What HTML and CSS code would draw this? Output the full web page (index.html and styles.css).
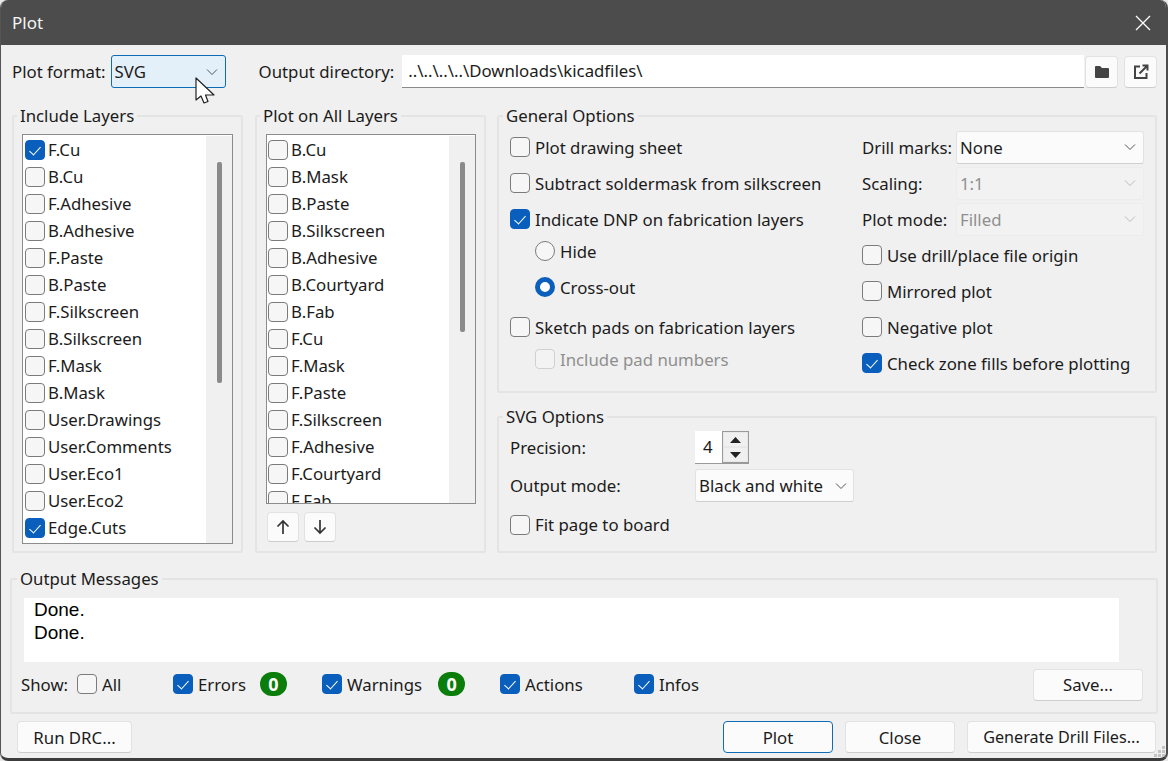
FILE: index.html
```html
<!DOCTYPE html>
<html lang="en">
<head>
<meta charset="utf-8">
<title>Plot</title>
<link rel="stylesheet" href="styles.css">
</head>
<body>
<div class="window">
  <header class="titlebar">
    <span class="title">Plot</span>
    <svg class="close-x" width="16" height="16" viewBox="0 0 16 16"><path d="M1 1 L15 15 M15 1 L1 15" stroke="#fff" stroke-width="1.300" fill="none"/></svg>
  </header>
  <div class="content">
    <div class="toprow">
      <span class="lbl">Plot format:</span>
      <div class="select format"><span>SVG</span><svg class="chev" width="12" height="8" viewBox="0 0 12 8"><path d="M1 1.500 L6 6.500 L11 1.500" stroke="#555" fill="none"/></svg></div>
      <span class="lbl outdir-label">Output directory:</span>
      <div class="textinput">..\..\..\..\Downloads\kicadfiles\</div>
      <button class="btn icon-btn"><svg width="16" height="14" viewBox="0 0 16 14"><path d="M1 2 a1 1 0 0 1 1-1 h4 l2 2 h6 a1 1 0 0 1 1 1 v8 a1 1 0 0 1-1 1 H2 a1 1 0 0 1-1-1 Z" fill="#444"/></svg></button>
      <button class="btn icon-btn"><svg width="18" height="18" viewBox="0 0 18 18"><path d="M8 3.500 H3 V15 H14.500 V10" stroke="#444" stroke-width="2" fill="none"/><path d="M7.500 10.500 L15 3 M10.500 2.500 H15.500 V7.500" stroke="#444" stroke-width="2" fill="none"/></svg></button>
    </div>
    <div class="main">
      <fieldset class="group include">
        <legend>Include Layers</legend>
        <div class="list">
          <div class="rows">
            <label class="check on"><i></i>F.Cu</label>
            <label class="check"><i></i>B.Cu</label>
            <label class="check"><i></i>F.Adhesive</label>
            <label class="check"><i></i>B.Adhesive</label>
            <label class="check"><i></i>F.Paste</label>
            <label class="check"><i></i>B.Paste</label>
            <label class="check"><i></i>F.Silkscreen</label>
            <label class="check"><i></i>B.Silkscreen</label>
            <label class="check"><i></i>F.Mask</label>
            <label class="check"><i></i>B.Mask</label>
            <label class="check"><i></i>User.Drawings</label>
            <label class="check"><i></i>User.Comments</label>
            <label class="check"><i></i>User.Eco1</label>
            <label class="check"><i></i>User.Eco2</label>
            <label class="check on"><i></i>Edge.Cuts</label>
          </div>
          <div class="scroll"><div class="thumb thumb-a"></div></div>
        </div>
      </fieldset>
      <fieldset class="group allayers">
        <legend>Plot on All Layers</legend>
        <div class="list short">
          <div class="rows">
            <label class="check"><i></i>B.Cu</label>
            <label class="check"><i></i>B.Mask</label>
            <label class="check"><i></i>B.Paste</label>
            <label class="check"><i></i>B.Silkscreen</label>
            <label class="check"><i></i>B.Adhesive</label>
            <label class="check"><i></i>B.Courtyard</label>
            <label class="check"><i></i>B.Fab</label>
            <label class="check"><i></i>F.Cu</label>
            <label class="check"><i></i>F.Mask</label>
            <label class="check"><i></i>F.Paste</label>
            <label class="check"><i></i>F.Silkscreen</label>
            <label class="check"><i></i>F.Adhesive</label>
            <label class="check"><i></i>F.Courtyard</label>
            <label class="check"><i></i>F.Fab</label>
          </div>
          <div class="scroll"><div class="thumb thumb-b"></div></div>
        </div>
        <div class="movers">
          <button class="btn mover"><svg width="14" height="16" viewBox="0 0 14 16"><path d="M7 15 V2 M1.500 7.500 L7 2 L12.500 7.500" stroke="#333" stroke-width="1.700" fill="none"/></svg></button>
          <button class="btn mover"><svg width="14" height="16" viewBox="0 0 14 16"><path d="M7 1 V14 M1.500 8.500 L7 14 L12.500 8.500" stroke="#333" stroke-width="1.700" fill="none"/></svg></button>
        </div>
      </fieldset>
      <div class="rightcol">
        <fieldset class="group general">
          <legend>General Options</legend>
          <div class="general-grid">
            <div class="gcol">
              <label class="check opt"><i></i>Plot drawing sheet</label>
              <label class="check opt"><i></i>Subtract soldermask from silkscreen</label>
              <label class="check opt on"><i></i>Indicate DNP on fabrication layers</label>
              <label class="radio opt tight"><i></i>Hide</label>
              <label class="radio opt on"><i></i>Cross-out</label>
              <label class="check opt loose"><i></i>Sketch pads on fabrication layers</label>
              <label class="check opt tight sub disabled"><i></i>Include pad numbers</label>
            </div>
            <div class="gcol">
              <div class="opt field"><span class="field-label">Drill marks:</span><div class="select wide enabled"><span>None</span><svg class="chev" width="12" height="8" viewBox="0 0 12 8"><path d="M1 1.500 L6 6.500 L11 1.500" stroke="#555" fill="none"/></svg></div></div>
              <div class="opt field"><span class="field-label">Scaling:</span><div class="select wide off"><span>1:1</span><svg class="chev" width="12" height="8" viewBox="0 0 12 8"><path d="M1 1.500 L6 6.500 L11 1.500" stroke="#bbb" fill="none"/></svg></div></div>
              <div class="opt field"><span class="field-label">Plot mode:</span><div class="select wide off"><span>Filled</span><svg class="chev" width="12" height="8" viewBox="0 0 12 8"><path d="M1 1.500 L6 6.500 L11 1.500" stroke="#bbb" fill="none"/></svg></div></div>
              <label class="check opt"><i></i>Use drill/place file origin</label>
              <label class="check opt"><i></i>Mirrored plot</label>
              <label class="check opt"><i></i>Negative plot</label>
              <label class="check opt on"><i></i>Check zone fills before plotting</label>
            </div>
          </div>
        </fieldset>
        <fieldset class="group svgopts">
          <legend>SVG Options</legend>
          <div class="svg-row prec">
            <span class="svg-label">Precision:</span>
            <div class="spin">
              <span class="spin-val">4</span>
              <div class="spin-btns">
                <span class="spin-btn"><svg width="11" height="6" viewBox="0 0 11 6"><path d="M5.500 0 L11 6 H0 Z" fill="#222"/></svg></span>
                <span class="spin-btn"><svg width="11" height="6" viewBox="0 0 11 6"><path d="M0 0 H11 L5.500 6 Z" fill="#222"/></svg></span>
              </div>
            </div>
          </div>
          <div class="svg-row mode">
            <span class="svg-label">Output mode:</span>
            <div class="select enabled outmode"><span>Black and white</span><svg class="chev" width="12" height="8" viewBox="0 0 12 8"><path d="M1 1.500 L6 6.500 L11 1.500" stroke="#555" fill="none"/></svg></div>
          </div>
          <label class="check svg-row fit"><i></i>Fit page to board</label>
        </fieldset>
      </div>
    </div>
    <fieldset class="group output">
      <legend>Output Messages</legend>
      <div class="messages">Done.<br>Done.</div>
      <div class="showrow">
        <span class="show-label">Show:</span>
        <div class="show-item w-all"><label class="check"><i></i>All</label></div>
        <div class="show-item w-err"><label class="check on"><i></i>Errors</label><span class="badge b-err">0</span></div>
        <div class="show-item w-warn"><label class="check on"><i></i>Warnings</label><span class="badge b-warn">0</span></div>
        <div class="show-item w-act"><label class="check on"><i></i>Actions</label></div>
        <div class="show-item w-info"><label class="check on"><i></i>Infos</label></div>
        <button class="btn save">Save...</button>
      </div>
    </fieldset>
    <div class="footer">
      <button class="btn drc">Run DRC...</button>
      <button class="btn plot">Plot</button>
      <button class="btn close">Close</button>
      <button class="btn drill">Generate Drill Files...</button>
    </div>
  </div>
  <svg class="cursor" width="20" height="28" viewBox="0 0 20 28"><path d="M1 1 V23 L6 19 L9 26 L13 24.500 L10.500 18 H19 Z" fill="#fff" stroke="#222" stroke-width="1.200" stroke-linejoin="round"/></svg>
  <svg class="grip" width="11" height="11" viewBox="0 0 11 11"><path d="M8 0h3v3H8z M4 4h3v3H4z M8 4h3v3H8z M0 8h3v3H0z M4 8h3v3H4z M8 8h3v3H8z" fill="#c4c4c4"/></svg>
</div>
</body>
</html>
```
FILE: styles.css
```css
* { box-sizing: border-box; }
html, body { margin: 0; padding: 0; }
body {
  width: 1168px;
  height: 761px;
  overflow: hidden;
  background: #e9e9e9;
  font-family: "Noto Sans", sans-serif;
  font-size: 16.8px;
  color: #1b1b1b;
}
.window {
  position: relative;
  width: 1168px;
  height: 761px;
  background: #f0f0f0;
  border-left: 1px solid #555;
  border-right: 2px solid #4c4c4c;
  border-bottom: 3px solid #3c3c3c;
  border-radius: 8px;
  overflow: hidden;
}
.titlebar {
  height: 45px;
  background: #4c4c4c;
  color: #f4f4f4;
  display: flex;
  align-items: center;
  justify-content: space-between;
  padding: 0 15px 0 11px;
}
.title { font-size: 17px; }
.content { padding: 10px 0 0 0; }
.toprow {
  display: flex;
  align-items: center;
  height: 33px;
  padding-left: 11px;
}
.lbl { white-space: nowrap; }
.select {
  display: flex;
  align-items: center;
  justify-content: space-between;
  height: 33px;
  padding: 0 7px 0 3px;
  border-radius: 3px;
  background: #fbfbfb;
  border: 1px solid #e2e2e2;
  border-bottom-color: #cfcfcf;
}
.format {
  width: 115px;
  margin-left: 5px;
  background: #e3eff9;
  border-color: #0d6cb5;
}
.outdir-label { margin-left: 33px; }
.textinput {
  width: 682px;
  height: 33px;
  margin-left: 8px;
  padding: 3px 6px;
  background: #fff;
  border-bottom: 1px solid #8a8a8a;
  line-height: 26px;
}
.btn {
  font: inherit;
  color: inherit;
  background: #fbfbfb;
  border: 1px solid #e2e2e2;
  border-bottom-color: #cdcdcd;
  border-radius: 4px;
  padding: 0;
  display: flex;
  align-items: center;
  justify-content: center;
}
.icon-btn { width: 33px; height: 32px; margin-left: 1px; }
.icon-btn + .icon-btn { margin-left: 6px; }
.main {
  display: flex;
  margin-top: 18px;
  padding-left: 11px;
  height: 447px;
}
.group {
  margin: 0;
  padding: 0;
  min-width: 0;
  border: 2px solid #e4e4e4;
  border-radius: 2px;
}
.group legend {
  padding: 0 3px;
  margin-left: -7px;
  height: 20px;
  line-height: 20px;
}
.include { width: 231px; padding: 8px 8px 0 8px; height: 447px; }
.allayers { width: 231px; margin-left: 12px; padding: 8px 8px 0 9px; height: 447px; }
.include legend { margin-left: -5px; }
.allayers legend { margin-left: -6px; }
.list {
  display: flex;
  height: 410px;
  border: 1px solid #8c8c8c;
  background: #fff;
  overflow: hidden;
}
.short { height: 370px; }
.rows { flex: 1; padding: 1px 0 0 1px; min-width: 0; }
.include .rows { padding-left: 2px; }
.scroll {
  width: 26px;
  background: #f0f0f0;
  margin-top: 1px;
  display: flex;
  justify-content: center;
  flex: none;
}
.thumb { width: 5px; background: #8a8a8a; border-radius: 2px; }
.thumb-a { height: 221px; margin-top: 26px; }
.thumb-b { height: 170px; margin-top: 26px; }
.check, .radio {
  display: flex;
  align-items: center;
  height: 27px;
  white-space: nowrap;
}
.check i, .radio i {
  flex: none;
  display: block;
  width: 20px;
  height: 20px;
  margin-right: 5px;
  border: 1px solid #7b7b7b;
  border-radius: 4px;
  background: #f6f6f6 center no-repeat;
}
.rows .check i { margin-right: 3px; }
.check.on i {
  background-color: #0a5fbd;
  border-color: #0a5fbd;
  position: relative;
}
.check.on i::after {
  content: "";
  position: absolute;
  left: 6px;
  top: 3px;
  width: 5px;
  height: 10px;
  border: solid #fff;
  border-width: 0 1px 1px 0;
  transform: rotate(42deg);
}
.radio i { border-radius: 50%; }
.radio.on i { background: #fff; border: 5px solid #0a5fbd; }
.movers { display: flex; gap: 5px; margin-top: 8px; margin-left: 1px; }
.mover { width: 32px; height: 30px; }
.rightcol {
  margin-left: 11px;
  width: 660px;
  display: flex;
  flex-direction: column;
  gap: 14px;
}
.general { height: 287px; padding: 5px 0 0 11px; }
.general-grid {
  display: grid;
  grid-template-columns: 352px 1fr;
}
.gcol { display: flex; flex-direction: column; gap: 4px; }
.opt { height: 32px; }
.tight { margin-top: -4px; }
.radio.opt { margin-left: 25px; }
.loose { margin-top: 4px; }
.sub { margin-left: 25px; }
.disabled { color: #8f8f8f; }
.disabled i { border-color: #d0d0d0; background: #f3f3f3; }
.field { display: flex; align-items: center; }
.field-label { width: 94px; flex: none; }
.wide { width: 188px; }
.off { background: #f2f2f2; border-color: #ececec; color: #8f8f8f; }
.svgopts { flex: 1; padding: 4px 0 0 11px; }
.svg-row { display: flex; align-items: center; height: 33px; }
.svg-label { width: 185px; flex: none; }
.mode { margin-top: 5px; }
.fit { margin-top: 6px; height: 33px; }
.spin { display: flex; height: 33px; width: 54px; border-bottom: 1px solid #999; background: #fff; }
.spin-val { flex: 1; padding-left: 8px; line-height: 32px; }
.spin-btns {
  width: 27px;
  display: flex;
  flex-direction: column;
  border: 1px solid #9a9a9a;
  background: #f0f0f0;
}
.spin-btn { flex: 1; display: flex; align-items: center; justify-content: center; border: 1px solid #e8e8e8; }
.outmode { width: 159px; padding-right: 6px; }
.output {
  margin: 16px 0 0 9px;
  width: 1148px;
  height: 145px;
  padding: 9px 0 0 12px;
}
.messages {
  width: 1095px;
  height: 64px;
  background: #fff;
  padding: 0 0 0 10px;
  font-family: "Liberation Sans", sans-serif;
  font-size: 19px;
  line-height: 23px;
  color: #000;
}
.showrow { display: flex; align-items: center; height: 32px; margin-top: 6px; margin-left: -3px; }
.show-label { width: 56px; flex: none; }
.show-item { display: flex; align-items: center; flex: none; }
.w-all { width: 96px; }
.w-err { width: 149px; }
.w-warn { width: 178px; }
.w-act { width: 134px; }
.w-info { width: 399px; }
.badge {
  width: 27px;
  height: 24px;
  border-radius: 12px;
  background: #0a7d0a;
  color: #fff;
  font-weight: 700;
  font-size: 18px;
  line-height: 24px;
  text-align: center;
}
.b-err { margin-left: 14px; }
.b-warn { margin-left: 16px; }
.save { width: 110px; height: 32px; flex: none; margin-top: 1px; }
.footer {
  display: flex;
  margin-top: 7px;
  padding-left: 16px;
}
.footer .btn { height: 32px; }
.drc { width: 115px; }
.plot { width: 110px; margin-left: 591px; border-color: #0d6cb5; }
.close { width: 110px; margin-left: 12px; }
.drill { width: 189px; margin-left: 12px; font-size: 16.2px; }
.cursor { position: absolute; left: 194px; top: 77px; }
.grip { position: absolute; right: 1px; bottom: 1px; }
```
